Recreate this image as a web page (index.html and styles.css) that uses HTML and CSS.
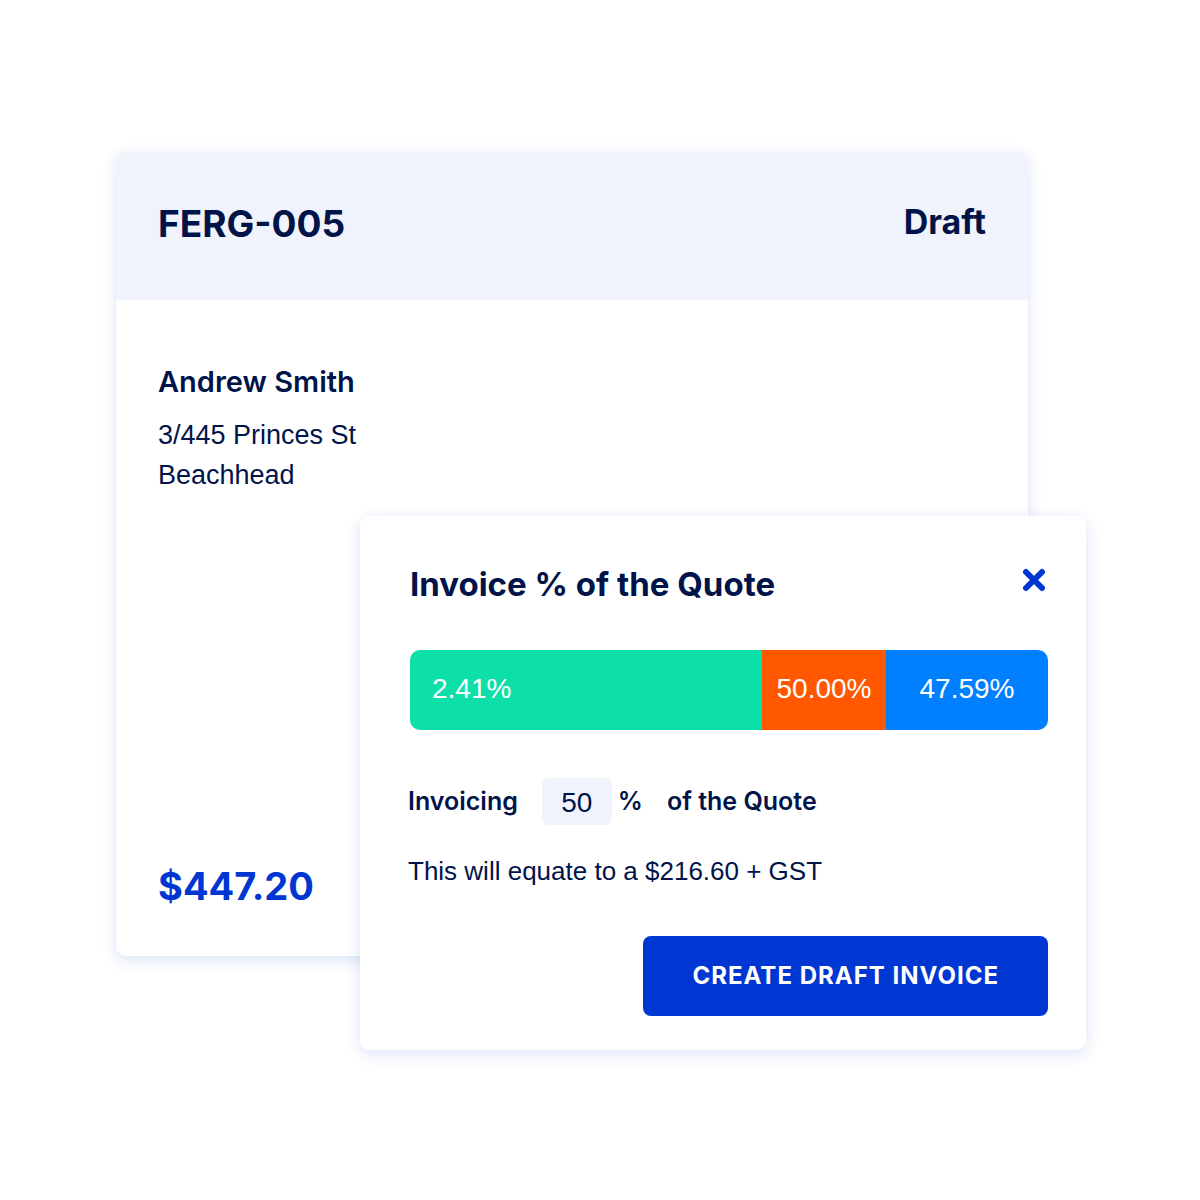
FILE: index.html
```html
<!DOCTYPE html>
<html lang="en">
<head>
  <meta charset="utf-8">
  <meta name="viewport" content="width=device-width, initial-scale=1">
  <title>FERG-005 – Draft invoice</title>
  <link rel="stylesheet" href="styles.css">
</head>
<body>
  <main class="stage">
    <article class="card quote">
      <header class="quote-header">
        <h1 class="quote-number">FERG-005</h1>
        <span class="quote-status">Draft</span>
      </header>
      <div class="quote-body">
        <address class="customer">
          <strong class="customer-name">Andrew Smith</strong>
          <span>3/445 Princes St</span>
          <span>Beachhead</span>
        </address>
        <p class="quote-total">$447.20</p>
      </div>
    </article>

    <form class="card dialog" role="dialog" aria-labelledby="dialog-title">
      <header class="dialog-header">
        <h2 class="dialog-title" id="dialog-title">Invoice % of the Quote</h2>
        <button class="close" type="button" aria-label="Close">
          <svg width="24" height="24" viewBox="0 0 24 24" aria-hidden="true">
            <path d="M4 4 20 20M20 4 4 20" fill="none" stroke="currentColor" stroke-width="6" stroke-linecap="round"/>
          </svg>
        </button>
      </header>

      <div class="split">
        <div class="segment segment-invoiced">2.41%</div>
        <div class="segment segment-current">50.00%</div>
        <div class="segment segment-remaining">47.59%</div>
      </div>

      <div class="details">
        <div class="amount">
          <label for="percent">Invoicing</label>
          <span class="amount-field">
            <input class="percent" id="percent" type="text" inputmode="decimal" value="50">
            <span>%</span>
          </span>
          <span>of the Quote</span>
        </div>
        <p class="summary">This will equate to a $216.60 + GST</p>
      </div>

      <button class="submit" type="submit">CREATE DRAFT INVOICE</button>
    </form>
  </main>
</body>
</html>
```

FILE: styles.css
```css
:root {
  --navy: #001449;
  --blue: #0036d1;
  --tint: #f0f3fc;
}

* {
  box-sizing: border-box;
}

body,
h1,
h2,
p {
  margin: 0;
}

body {
  background: #fff;
  color: var(--navy);
  font: 400 27px/40px "Liberation Sans", Arial, sans-serif;
}

button,
input {
  border: 0;
  color: inherit;
  font: inherit;
}

/* Both cards share one grid cell, so the dialog overlaps the quote. */
.stage {
  display: grid;
  padding: 152px 114px 150px 116px;
}

.card {
  grid-area: 1 / 1;
  display: flex;
  flex-direction: column;
  border-radius: 10px;
  background: #fff;
  box-shadow: 0 4px 16px rgba(0, 54, 209, 0.14);
}

.quote {
  margin: 0 58px 94px 0;
}

.quote-header {
  display: flex;
  justify-content: space-between;
  padding: 48px 42px 52px;
  border-radius: 10px 10px 0 0;
  background: var(--tint);
  font-family: Inter, sans-serif;
}

.quote-number,
.quote-total {
  font: 700 37px/48px Inter, sans-serif;
}

.quote-total {
  color: var(--blue);
  font-size: 38px;
}

.quote-status {
  font-size: 34px;
  font-weight: 700;
  line-height: 44px;
}

.quote-body {
  flex: 1;
  display: flex;
  flex-direction: column;
  justify-content: space-between;
  padding: 62px 42px 46px;
}

.customer {
  display: flex;
  flex-direction: column;
  font-style: normal;
}

.customer-name {
  margin-bottom: 13px;
  font: 600 29px/40px Inter, sans-serif;
}

.dialog {
  margin: 364px 0 0 244px;
  padding: 44px 38px 34px 48px;
}

.dialog-header {
  display: flex;
  justify-content: space-between;
  align-items: flex-start;
  margin: 0 0 42px 2px;
}

.dialog-title {
  font: 700 33px/48px Inter, sans-serif;
}

.close {
  display: flex;
  padding: 8px 2px;
  background: none;
  color: var(--blue);
}

.split {
  display: grid;
  grid-template-columns: 352fr 124fr 162fr;
  margin-left: 2px;
  border-radius: 10px;
  overflow: hidden;
  color: #fff;
  font-size: 28px;
}

.segment {
  padding: 19px 0 21px;
  text-align: center;
}

.segment-invoiced {
  padding-left: 22px;
  background: #0ddfa9;
  text-align: left;
}

.segment-current {
  background: #ff5800;
}

.segment-remaining {
  background: #007fff;
}

.details {
  display: flex;
  flex-direction: column;
  gap: 26px;
  margin: 48px 0 45px;
}

.amount {
  display: flex;
  align-items: center;
  gap: 24px;
  font: 600 25px/47px Inter, sans-serif;
}

.amount-field {
  display: flex;
  gap: 6px;
}

.percent {
  width: 70px;
  height: 47px;
  padding: 2px 0 0;
  border-radius: 7px;
  background: var(--tint);
  font: 400 28px/40px "Liberation Sans", Arial, sans-serif;
  text-align: center;
}

.summary {
  font-size: 26px;
}

.submit {
  align-self: flex-end;
  padding: 20px 49px;
  border-radius: 8px;
  background: var(--blue);
  color: #fff;
  font: 700 24px/40px Inter, sans-serif;
  letter-spacing: 1px;
}
```
